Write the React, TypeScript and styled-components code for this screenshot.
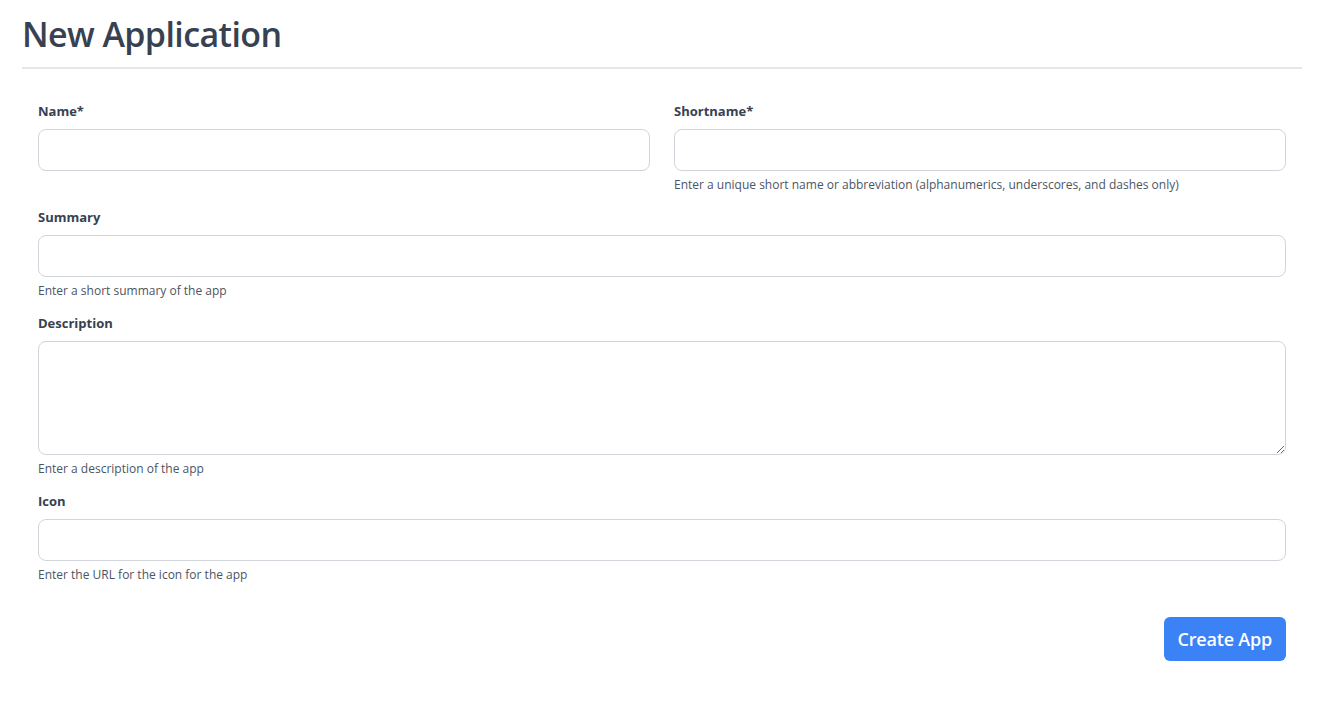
import React from 'react';
import styled, { createGlobalStyle } from 'styled-components';

const GlobalStyle = createGlobalStyle`
  * {
    box-sizing: border-box;
  }
  body {
    margin: 0;
    background: #ffffff;
    font-family: 'Open Sans', 'Noto Sans', sans-serif;
    color: #374151;
  }
`;

const Page = styled.div`
  padding: 8px 32px 40px 22px;
`;

const Title = styled.h1`
  margin: 0;
  font-size: 34px;
  line-height: 52px;
  font-weight: 600;
  color: #374151;
  letter-spacing: -0.6px;
`;

const Divider = styled.hr`
  margin: 7px 0 0;
  border: none;
  border-top: 2px solid #e5e7eb;
`;

const Form = styled.form`
  padding: 32px 16px 0;
  display: flex;
  flex-direction: column;
  gap: 14px;
`;

const Row = styled.div`
  display: grid;
  grid-template-columns: 1fr 1fr;
  column-gap: 24px;
`;

const Field = styled.div`
  display: flex;
  flex-direction: column;
`;

const Label = styled.label`
  font-size: 13px;
  line-height: 20px;
  font-weight: 700;
  color: #374151;
  margin-bottom: 8px;
`;

const Input = styled.input`
  height: 42px;
  width: 100%;
  border: 1px solid #d1d5db;
  border-radius: 8px;
  padding: 0 12px;
  font: inherit;
  font-size: 14px;
  background: #fff;
  outline: none;
`;

const TextArea = styled.textarea`
  height: 114px;
  width: 100%;
  border: 1px solid #d1d5db;
  border-radius: 8px;
  padding: 8px 12px;
  font: inherit;
  font-size: 14px;
  background: #fff;
  outline: none;
  resize: vertical;
`;

const Help = styled.p`
  margin: 6px 0 0;
  font-size: 12px;
  line-height: 16px;
  color: #4b5563;
`;

const Actions = styled.div`
  display: flex;
  justify-content: flex-end;
  margin-top: 20px;
`;

const Button = styled.button`
  height: 44px;
  padding: 0 14px;
  border: none;
  border-radius: 6px;
  background: #3b82f6;
  color: #ffffff;
  font: inherit;
  font-size: 18px;
  font-weight: 600;
  letter-spacing: -0.2px;
  cursor: pointer;
`;

export default function App() {
  return (
    <>
      <GlobalStyle />
      <Page>
        <Title>New Application</Title>
        <Divider />
        <Form onSubmit={(e) => e.preventDefault()}>
          <Row>
            <Field>
              <Label htmlFor="name">Name*</Label>
              <Input id="name" type="text" />
            </Field>
            <Field>
              <Label htmlFor="shortname">Shortname*</Label>
              <Input id="shortname" type="text" />
              <Help>
                Enter a unique short name or abbreviation (alphanumerics,
                underscores, and dashes only)
              </Help>
            </Field>
          </Row>
          <Field>
            <Label htmlFor="summary">Summary</Label>
            <Input id="summary" type="text" />
            <Help>Enter a short summary of the app</Help>
          </Field>
          <Field>
            <Label htmlFor="description">Description</Label>
            <TextArea id="description" />
            <Help>Enter a description of the app</Help>
          </Field>
          <Field>
            <Label htmlFor="icon">Icon</Label>
            <Input id="icon" type="text" />
            <Help>Enter the URL for the icon for the app</Help>
          </Field>
          <Actions>
            <Button type="submit">Create App</Button>
          </Actions>
        </Form>
      </Page>
    </>
  );
}
